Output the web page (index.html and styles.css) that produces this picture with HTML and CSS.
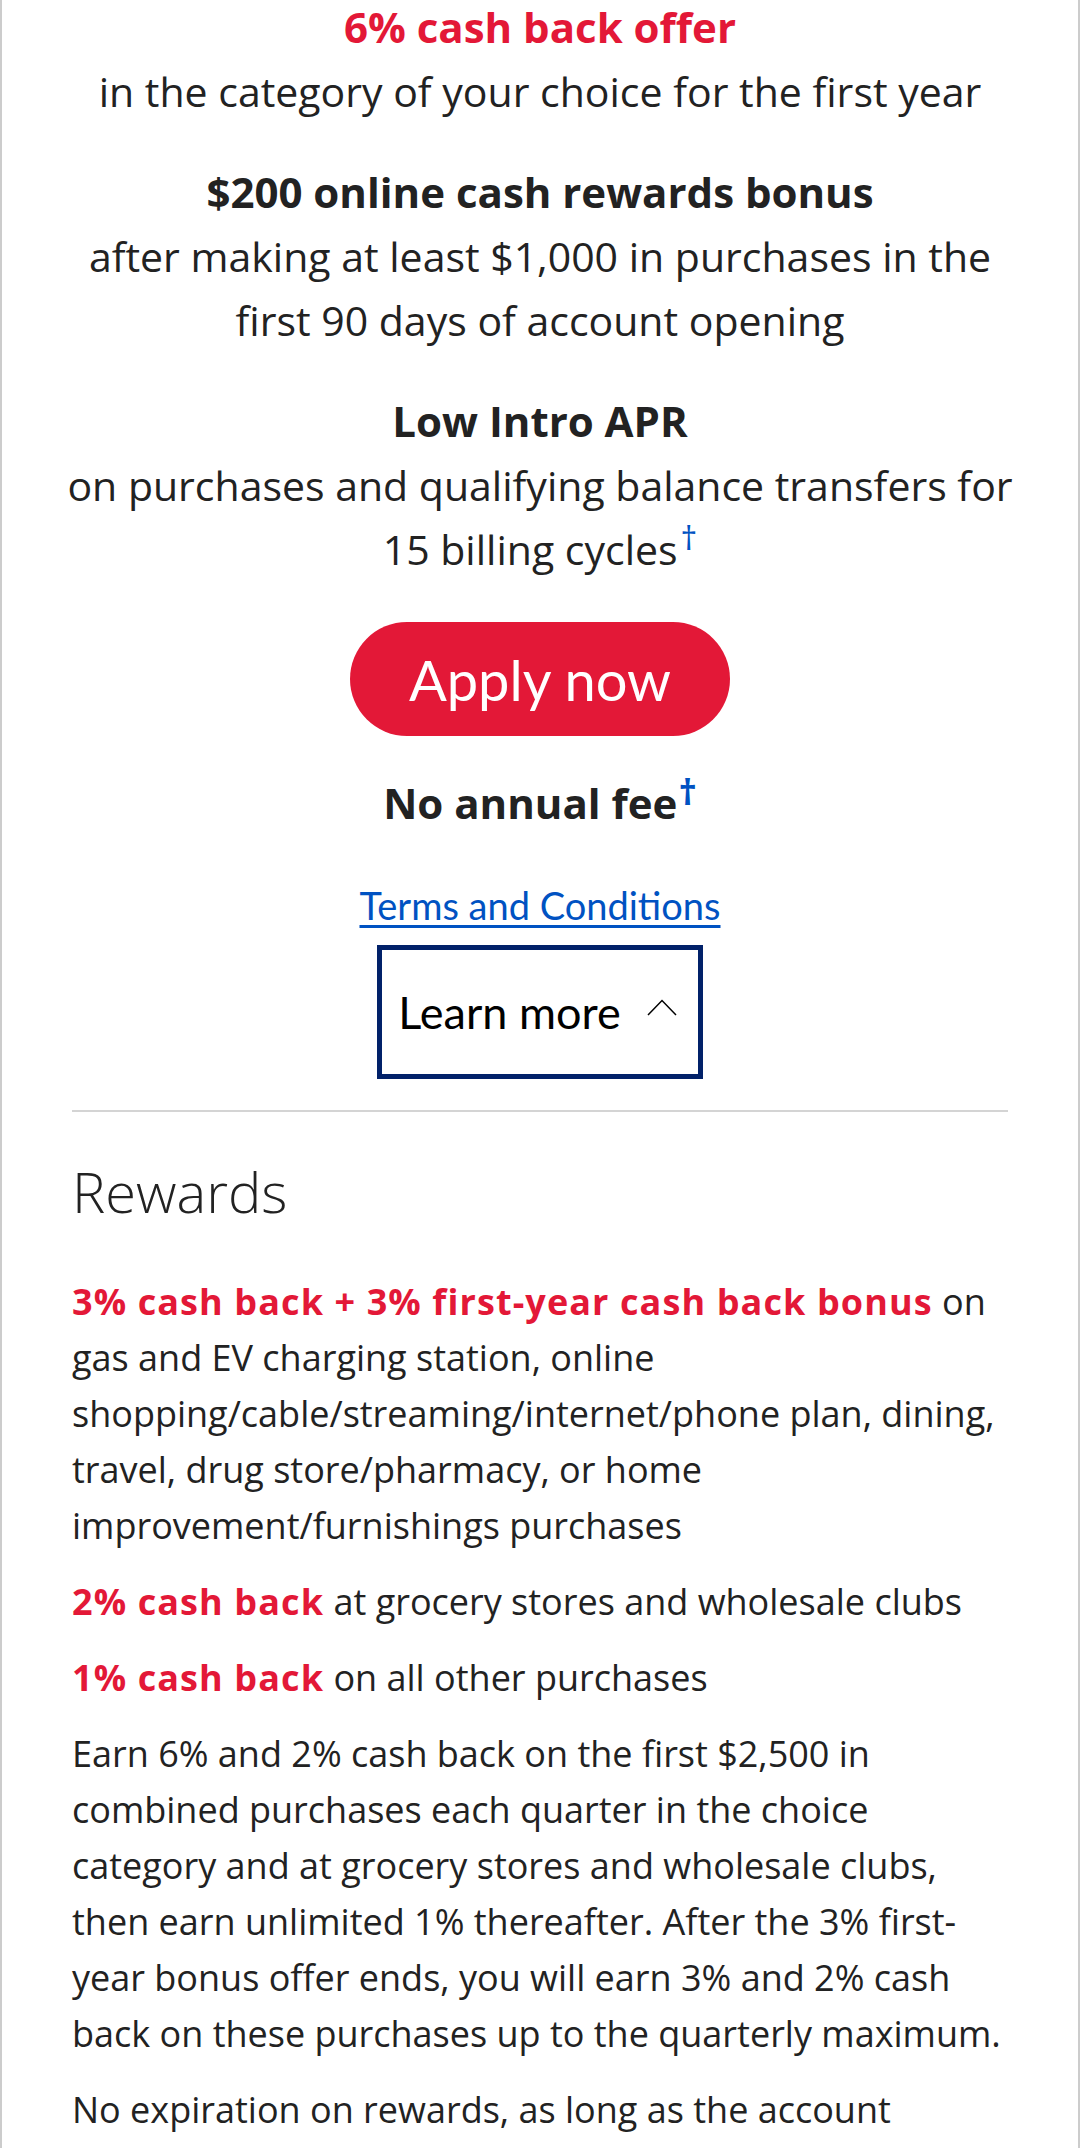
FILE: index.html
```html
<!DOCTYPE html>
<html lang="en">
<head>
    <meta charset="UTF-8">
    <meta name="viewport" content="width=device-width, initial-scale=1.0">
    <title>Customized Cash Rewards</title>
    <link rel="stylesheet" href="styles.css">
</head>
<body>
    <div class="card">
        <div class="offers">
            <div class="offer">
                <p class="offer-title red">6% cash back offer</p>
                <p>in the category of your choice for the first year</p>
            </div>
            <div class="offer">
                <p class="offer-title">$200 online cash rewards bonus</p>
                <p>after making at least $1,000 in purchases in the first 90 days of account opening</p>
            </div>
            <div class="offer">
                <p class="offer-title">Low Intro APR</p>
                <p>on purchases and qualifying balance transfers for 15 billing cycles<sup class="dagger">†</sup></p>
            </div>

            <a class="apply-btn" href="#">Apply now</a>

            <p class="fee">No annual fee<sup class="dagger">†</sup></p>

            <p class="terms"><a href="#">Terms and Conditions</a></p>

            <button class="learn-more" type="button">
                Learn more
                <svg width="30" height="17" viewBox="0 0 30 17" aria-hidden="true">
                    <path d="M1 16 L15 1.5 L29 16" fill="none" stroke="#000" stroke-width="1.5"/>
                </svg>
            </button>
        </div>

        <hr class="divider">

        <div class="rewards">
            <h2>Rewards</h2>
            <p><strong class="red">3% cash back + 3% first-year cash back bonus</strong> on gas and EV charging station, online shopping/cable/streaming/internet/phone plan, dining, travel, drug store/pharmacy, or home improvement/furnishings purchases</p>
            <p><strong class="red">2% cash back</strong> at grocery stores and wholesale clubs</p>
            <p><strong class="red">1% cash back</strong> on all other purchases</p>
            <p>Earn 6% and 2% cash back on the first $2,500 in combined purchases each quarter in the choice category and at grocery stores and wholesale clubs, then earn unlimited 1% thereafter. After the 3% first-year bonus offer ends, you will earn 3% and 2% cash back on these purchases up to the quarterly maximum.</p>
            <p>No expiration on rewards, as long as the account remains open.</p>
        </div>
    </div>
</body>
</html>
```

FILE: styles.css
```css
body {
    margin: 0;
    padding: 0;
    font-family: "Open Sans", "Noto Sans", sans-serif;
    color: #222;
    background-color: white;
    overflow: hidden;
}
.card {
    min-height: 2148px;
    padding: 0 70px;
    border-left: 2px solid #ccc;
    border-right: 2px solid #ccc;
}
.red {
    color: #e31837;
}
.offers {
    margin: -5px -10px 0;
    text-align: center;
}
.offer {
    margin-bottom: 37px;
}
.offer p {
    margin: 0;
    font-size: 41px;
    line-height: 64px;
}
.offer .offer-title {
    font-size: 42px;
    font-weight: bold;
}
.dagger {
    color: #0052c2;
    font-size: 0.8em;
    line-height: 0;
    vertical-align: 0.45em;
    margin-left: 3px;
}
.fee .dagger {
    font-size: 0.85em;
    vertical-align: 0.4em;
    margin-left: 1px;
}
.apply-btn {
    display: inline-flex;
    align-items: center;
    justify-content: center;
    width: 380px;
    height: 114px;
    margin-top: 4px;
    border-radius: 57px;
    background-color: #e31837;
    color: white;
    font-family: Lato, "Open Sans", sans-serif;
    font-size: 56px;
    text-decoration: none;
}
.fee {
    margin: 35px 0 0;
    font-size: 42px;
    font-weight: bold;
    line-height: 64px;
}
.terms {
    margin: 42px 0 0;
    font-family: Lato, "Open Sans", sans-serif;
    font-size: 38px;
    line-height: 57px;
}
.terms a {
    color: #0052c2;
    text-decoration-thickness: 3px;
    text-underline-offset: 5px;
}
.learn-more {
    display: inline-flex;
    align-items: center;
    gap: 26px;
    box-sizing: border-box;
    height: 134px;
    margin-top: 11px;
    padding: 0 21px 0 16px;
    border: 5px solid #012169;
    background-color: white;
    color: #000;
    font-family: Lato, "Open Sans", sans-serif;
    font-size: 45px;
}
.learn-more svg {
    margin-top: -10px;
}
.divider {
    margin: 31px 0 0;
    border: none;
    border-top: 2px solid #d4d4d4;
}
.rewards h2 {
    margin: 46px 0 49px;
    font-size: 56px;
    font-weight: 300;
    line-height: 1.2;
}
.rewards p {
    margin: 0 0 20px;
    font-size: 36px;
    line-height: 56px;
}
.rewards strong {
    letter-spacing: 1.1px;
}
```
